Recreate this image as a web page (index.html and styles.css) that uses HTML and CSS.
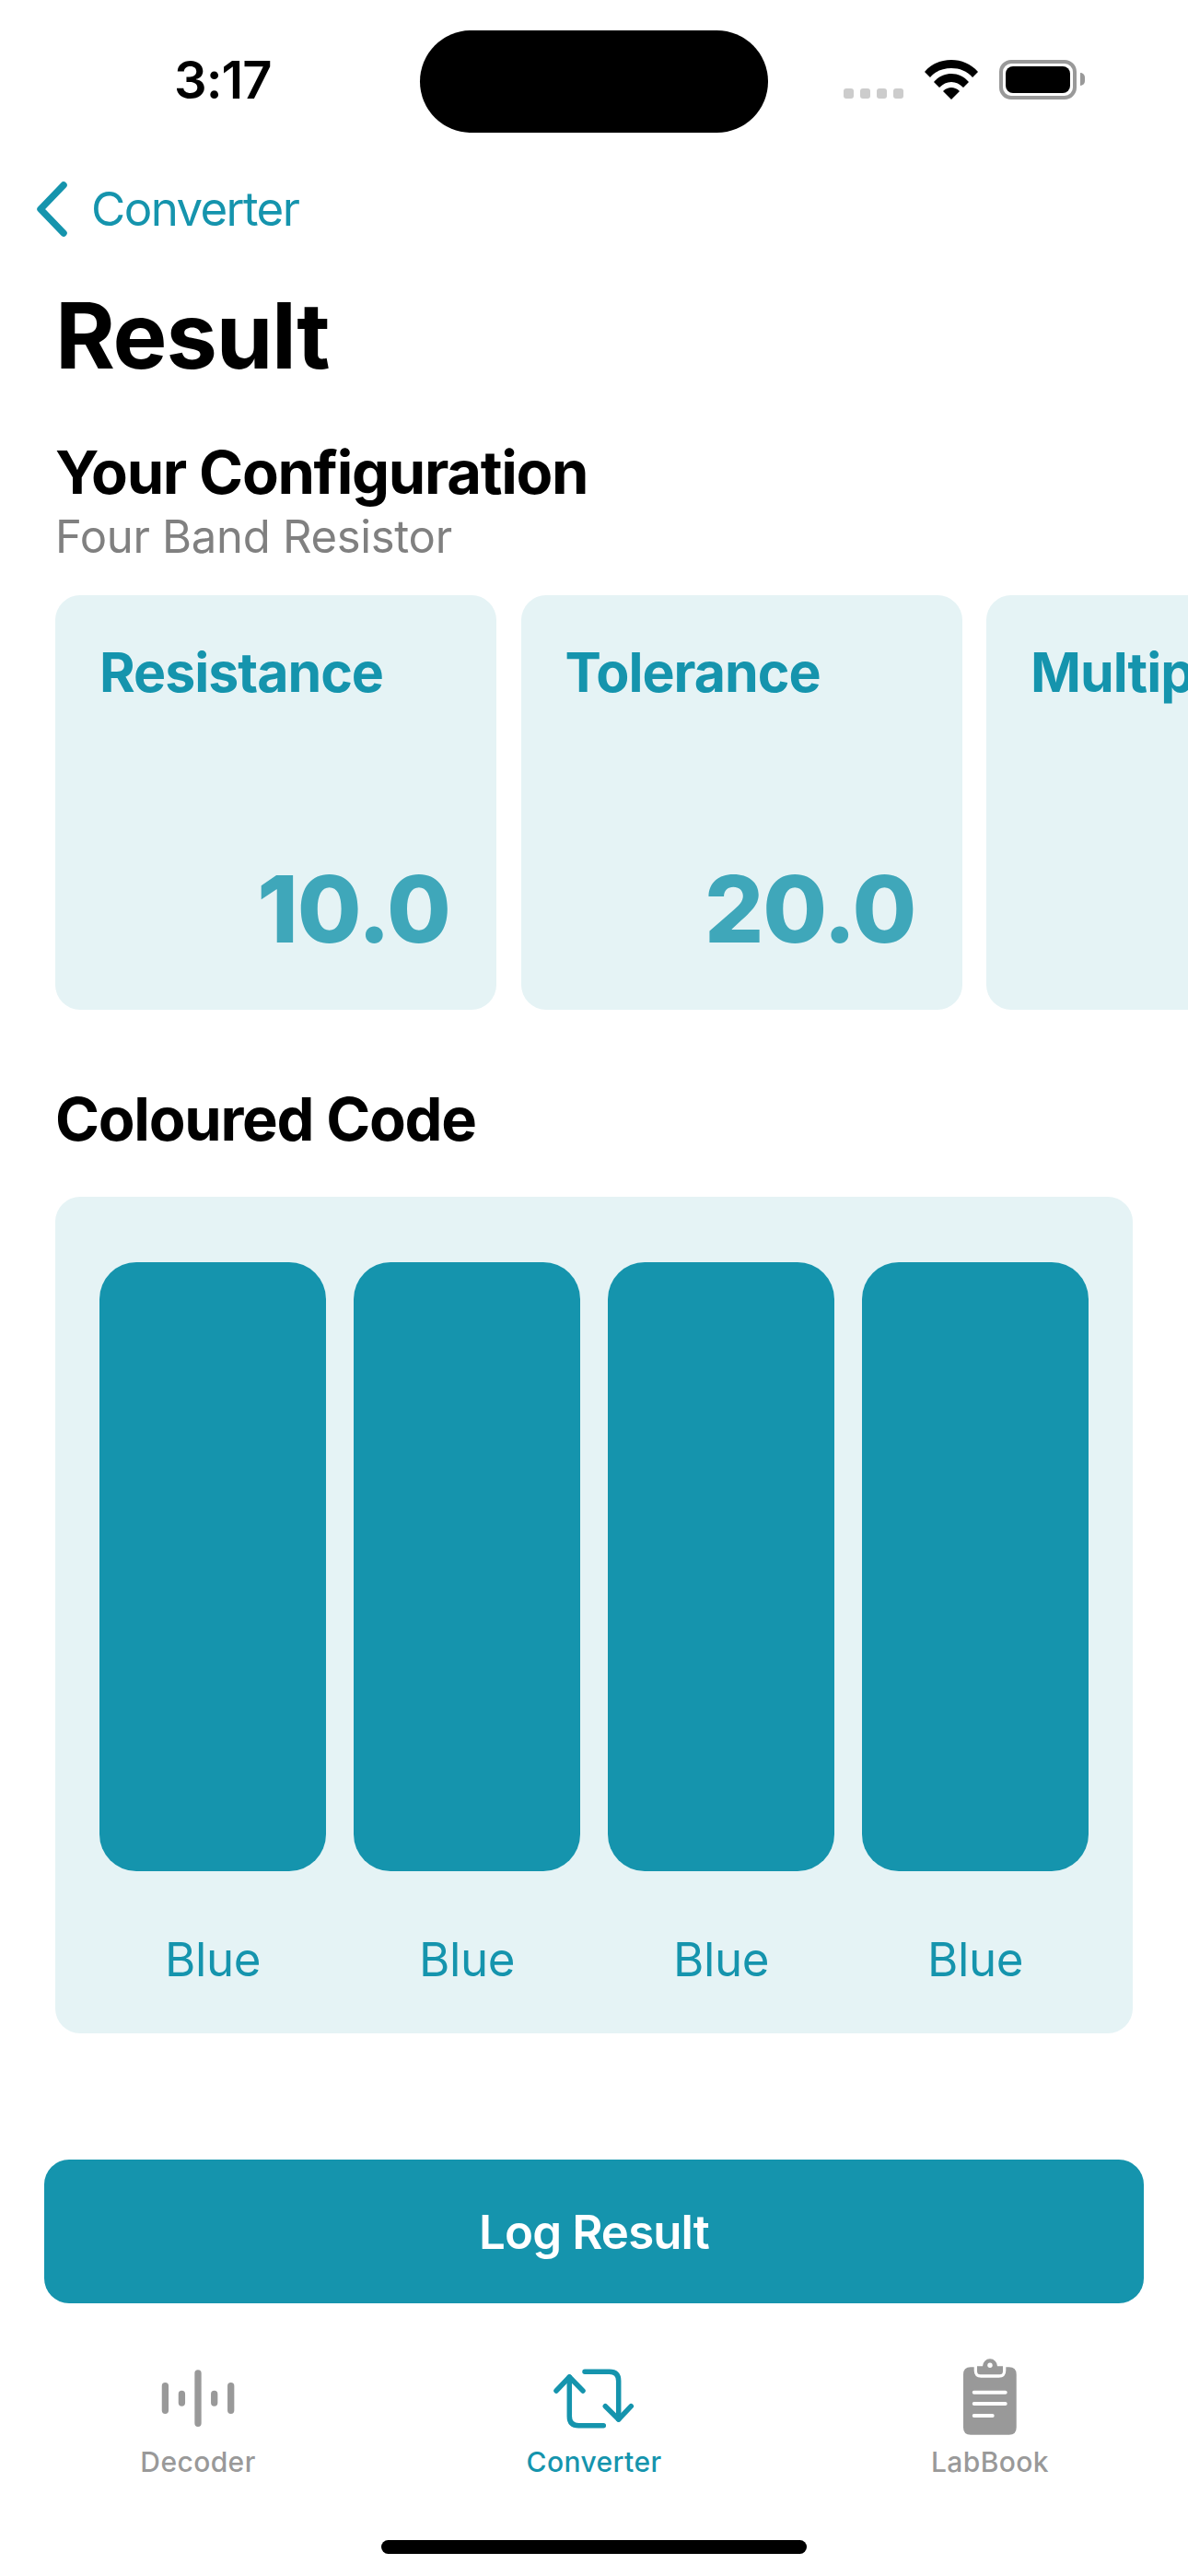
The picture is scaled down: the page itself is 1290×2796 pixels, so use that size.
FILE: index.html
```html
<!DOCTYPE html>
<html lang="en">
<head>
<meta charset="utf-8">
<title>Result</title>
<link rel="stylesheet" href="styles.css">
</head>
<body>
<div class="screen">
  <header class="status">
    <span class="time">3:17</span>
    <div class="island"></div>
    <div class="status-icons">
      <div class="dots"><i></i><i></i><i></i><i></i></div>
      <svg class="wifi" width="58" height="43" viewBox="0 0 58 43">
        <path d="M0 13 C8 4 18 0 29 0 C40 0 50 4 58 13 L52 19 C46 12 38 9 29 9 C20 9 12 12 6 19 Z" fill="#000"/>
        <path d="M10 24 C15 18 22 15 29 15 C36 15 43 18 48 24 L42 30 C38 26 34 24 29 24 C24 24 20 26 16 30 Z" fill="#000"/>
        <path d="M20 34 C23 31 26 30 29 30 C32 30 35 31 38 34 L29 43 Z" fill="#000"/>
      </svg>
      <div class="battery"><div class="battery-fill"></div></div>
      <div class="battery-nub"></div>
    </div>
  </header>

  <nav class="back">
    <svg class="chevron" width="36" height="60" viewBox="0 0 36 60">
      <path d="M32 4 L7 30 L32 56" fill="none" stroke="#1594ad" stroke-width="7.500" stroke-linecap="round" stroke-linejoin="round"/>
    </svg>
    <span class="back-label">Converter</span>
  </nav>

  <main class="content">
    <h1 class="title">Result</h1>
    <h2 class="heading">Your Configuration</h2>
    <p class="sub">Four Band Resistor</p>

    <div class="cards">
      <section class="card"><h3 class="card-title">Resistance</h3><div class="card-value">10.0</div></section>
      <section class="card"><h3 class="card-title">Tolerance</h3><div class="card-value">20.0</div></section>
      <section class="card"><h3 class="card-title">Multiplier</h3></section>
    </div>

    <h2 class="heading heading-code">Coloured Code</h2>

    <div class="panel">
      <div class="band"><div class="swatch"></div><span class="band-label">Blue</span></div>
      <div class="band"><div class="swatch"></div><span class="band-label">Blue</span></div>
      <div class="band"><div class="swatch"></div><span class="band-label">Blue</span></div>
      <div class="band"><div class="swatch"></div><span class="band-label">Blue</span></div>
    </div>
  </main>

  <button class="log">Log Result</button>

  <footer class="tabs">
    <div class="tab">
      <svg class="tab-icon" width="90" height="76" viewBox="0 0 90 76">
        <path d="M9.400 26.700V53.300M27.400 35.400V45M45 13V67.300M62.700 35.400V45M80.700 26.700V53.300" stroke="#999" stroke-width="7.300" stroke-linecap="round" fill="none"/>
      </svg>
      <span class="tab-label">Decoder</span>
    </div>
    <div class="tab tab-active">
      <svg class="tab-icon" width="90" height="76" viewBox="0 0 90 76">
        <g stroke="#1594ad" stroke-width="5.500" stroke-linecap="round" stroke-linejoin="round" fill="none">
          <path d="M4 32 L18.300 17 L33 32"/>
          <path d="M18.300 17 V59.700 Q18.300 69.700 28.300 69.700 H55.300"/>
          <path d="M35 11.300 H61.700 Q71.700 11.300 71.700 21.300 V63"/>
          <path d="M57.300 48.700 L71.700 63 L85.300 48.700"/>
        </g>
      </svg>
      <span class="tab-label">Converter</span>
    </div>
    <div class="tab">
      <svg class="tab-icon" width="90" height="76" viewBox="0 0 90 76">
        <path d="M24 6.300 H27.700 V10 Q27.700 17.700 35.400 17.700 H54.600 Q62.300 17.700 62.300 10 V6.300 H65.700 Q73.700 6.300 73.700 14.300 V71.700 Q73.700 79.700 65.700 79.700 H24 Q16 79.700 16 71.700 V14.300 Q16 6.300 24 6.300 Z" fill="#999"/>
        <path d="M31 5.300 H37 A8 8 0 0 1 53 5.300 H59 V10.800 Q59 14.300 55.500 14.300 H34.500 Q31 14.300 31 10.800 Z" fill="#999"/>
        <circle cx="45" cy="4.300" r="2.700" fill="#fff"/>
        <path d="M27.700 33.700H61.700M27.700 46H61.700M27.700 59H47.700" stroke="#fff" stroke-width="4" stroke-linecap="round" fill="none"/>
      </svg>
      <span class="tab-label">LabBook</span>
    </div>
  </footer>

  <div class="home"></div>
</div>
</body>
</html>
```

FILE: styles.css
```css
* { box-sizing: border-box; }
html, body { margin: 0; padding: 0; background: #fff; }
body { font-family: Inter, "Liberation Sans", sans-serif; color: #000; }
h1, h2, h3, p { margin: 0; }

.screen {
  width: 1290px;
  height: 2796px;
  overflow: hidden;
  display: flex;
  flex-direction: column;
  background: #fff;
}

.status {
  height: 111px;
  margin-top: 33px;
  flex: none;
  display: flex;
  align-items: flex-start;
}
.time {
  width: 456px;
  padding-left: 189px;
  padding-top: 23px;
  font-size: 56px;
  line-height: 62px;
  font-weight: 600;
  letter-spacing: -1px;
  white-space: nowrap;
}
.island { width: 378px; height: 111px; border-radius: 56px; background: #000; flex: none; }
.status-icons {
  display: flex;
  align-items: flex-start;
  padding-left: 82px;
  padding-top: 32px;
}
.dots { display: flex; gap: 7px; margin-top: 31px; }
.dots i { width: 11px; height: 11px; border-radius: 3px; background: #ccc; display: block; }
.wifi { margin-left: 23px; }
.battery {
  width: 84px;
  height: 43px;
  margin-left: 23px;
  border: 4px solid #999;
  border-radius: 13px;
  padding: 3px;
}
.battery-fill { width: 100%; height: 100%; background: #000; border-radius: 8px; }
.battery-nub { width: 5px; height: 14px; margin-left: 4px; margin-top: 14px; background: #999; border-radius: 0 7px 7px 0; }

.back { display: flex; align-items: center; height: 60px; margin-top: 53px; padding-left: 37px; flex: none; }
.back-label { margin-left: 26px; font-size: 51px; line-height: 60px; color: #1594ad; letter-spacing: -1.6px; }

.content { padding-left: 60px; flex: none; }
.title { font-size: 99px; line-height: 120px; font-weight: 700; margin-top: 47px; letter-spacing: -1.2px; }
.heading { font-size: 65px; line-height: 74px; font-weight: 700; margin-top: 52px; letter-spacing: -1.3px; }
.sub { font-size: 49px; line-height: 60px; color: #808080; margin-top: 3px; letter-spacing: -0.3px; }

.cards { display: flex; gap: 26.500px; margin-top: 33px; width: 1230px; overflow: hidden; }
.card {
  width: 479px;
  height: 450px;
  flex: none;
  border-radius: 27px;
  background: #e5f3f5;
  padding: 48px 50px 0 48px;
  display: flex;
  flex-direction: column;
  justify-content: space-between;
}
.card-title { font-size: 59px; line-height: 72px; font-weight: 700; color: #1594ad; white-space: nowrap; letter-spacing: -1px; }
.card-value { font-size: 101px; line-height: 120px; font-weight: 800; color: #3fa7ba; text-align: right; margin-bottom: 50px; letter-spacing: -1px; }

.heading-code { margin-top: 82px; }

.panel {
  width: 1170px;
  height: 908px;
  margin-top: 47px;
  border-radius: 27px;
  background: #e5f3f5;
  padding: 71px 48px 0;
  display: flex;
  gap: 30px;
}
.band { width: 246px; display: flex; flex-direction: column; align-items: center; }
.swatch { width: 246px; height: 661px; border-radius: 40px; background: #1594ad; }
.band-label { margin-top: 65px; font-size: 51px; line-height: 62px; color: #1594ad; letter-spacing: -0.4px; }

.log {
  width: 1194px;
  height: 156px;
  margin: 137px 0 0 48px;
  flex: none;
  border: 0;
  border-radius: 27px;
  background: #1594ad;
  color: #fff;
  font-family: inherit;
  font-size: 51px;
  font-weight: 600;
  letter-spacing: -0.9px;
}

.tabs { display: grid; grid-template-columns: repeat(3, 430px); height: 127px; margin-top: 63px; flex: none; }
.tab { display: flex; flex-direction: column; align-items: center; }
.tab-icon { display: block; overflow: visible; }
.tab-label { font-size: 30px; line-height: 36px; font-weight: 500; color: #999; margin-top: 15px; letter-spacing: 0.4px; }
.tab-active .tab-label { color: #1594ad; }

.home { width: 462px; height: 15px; border-radius: 8px; background: #000; margin: 67px auto 0; flex: none; }
```
